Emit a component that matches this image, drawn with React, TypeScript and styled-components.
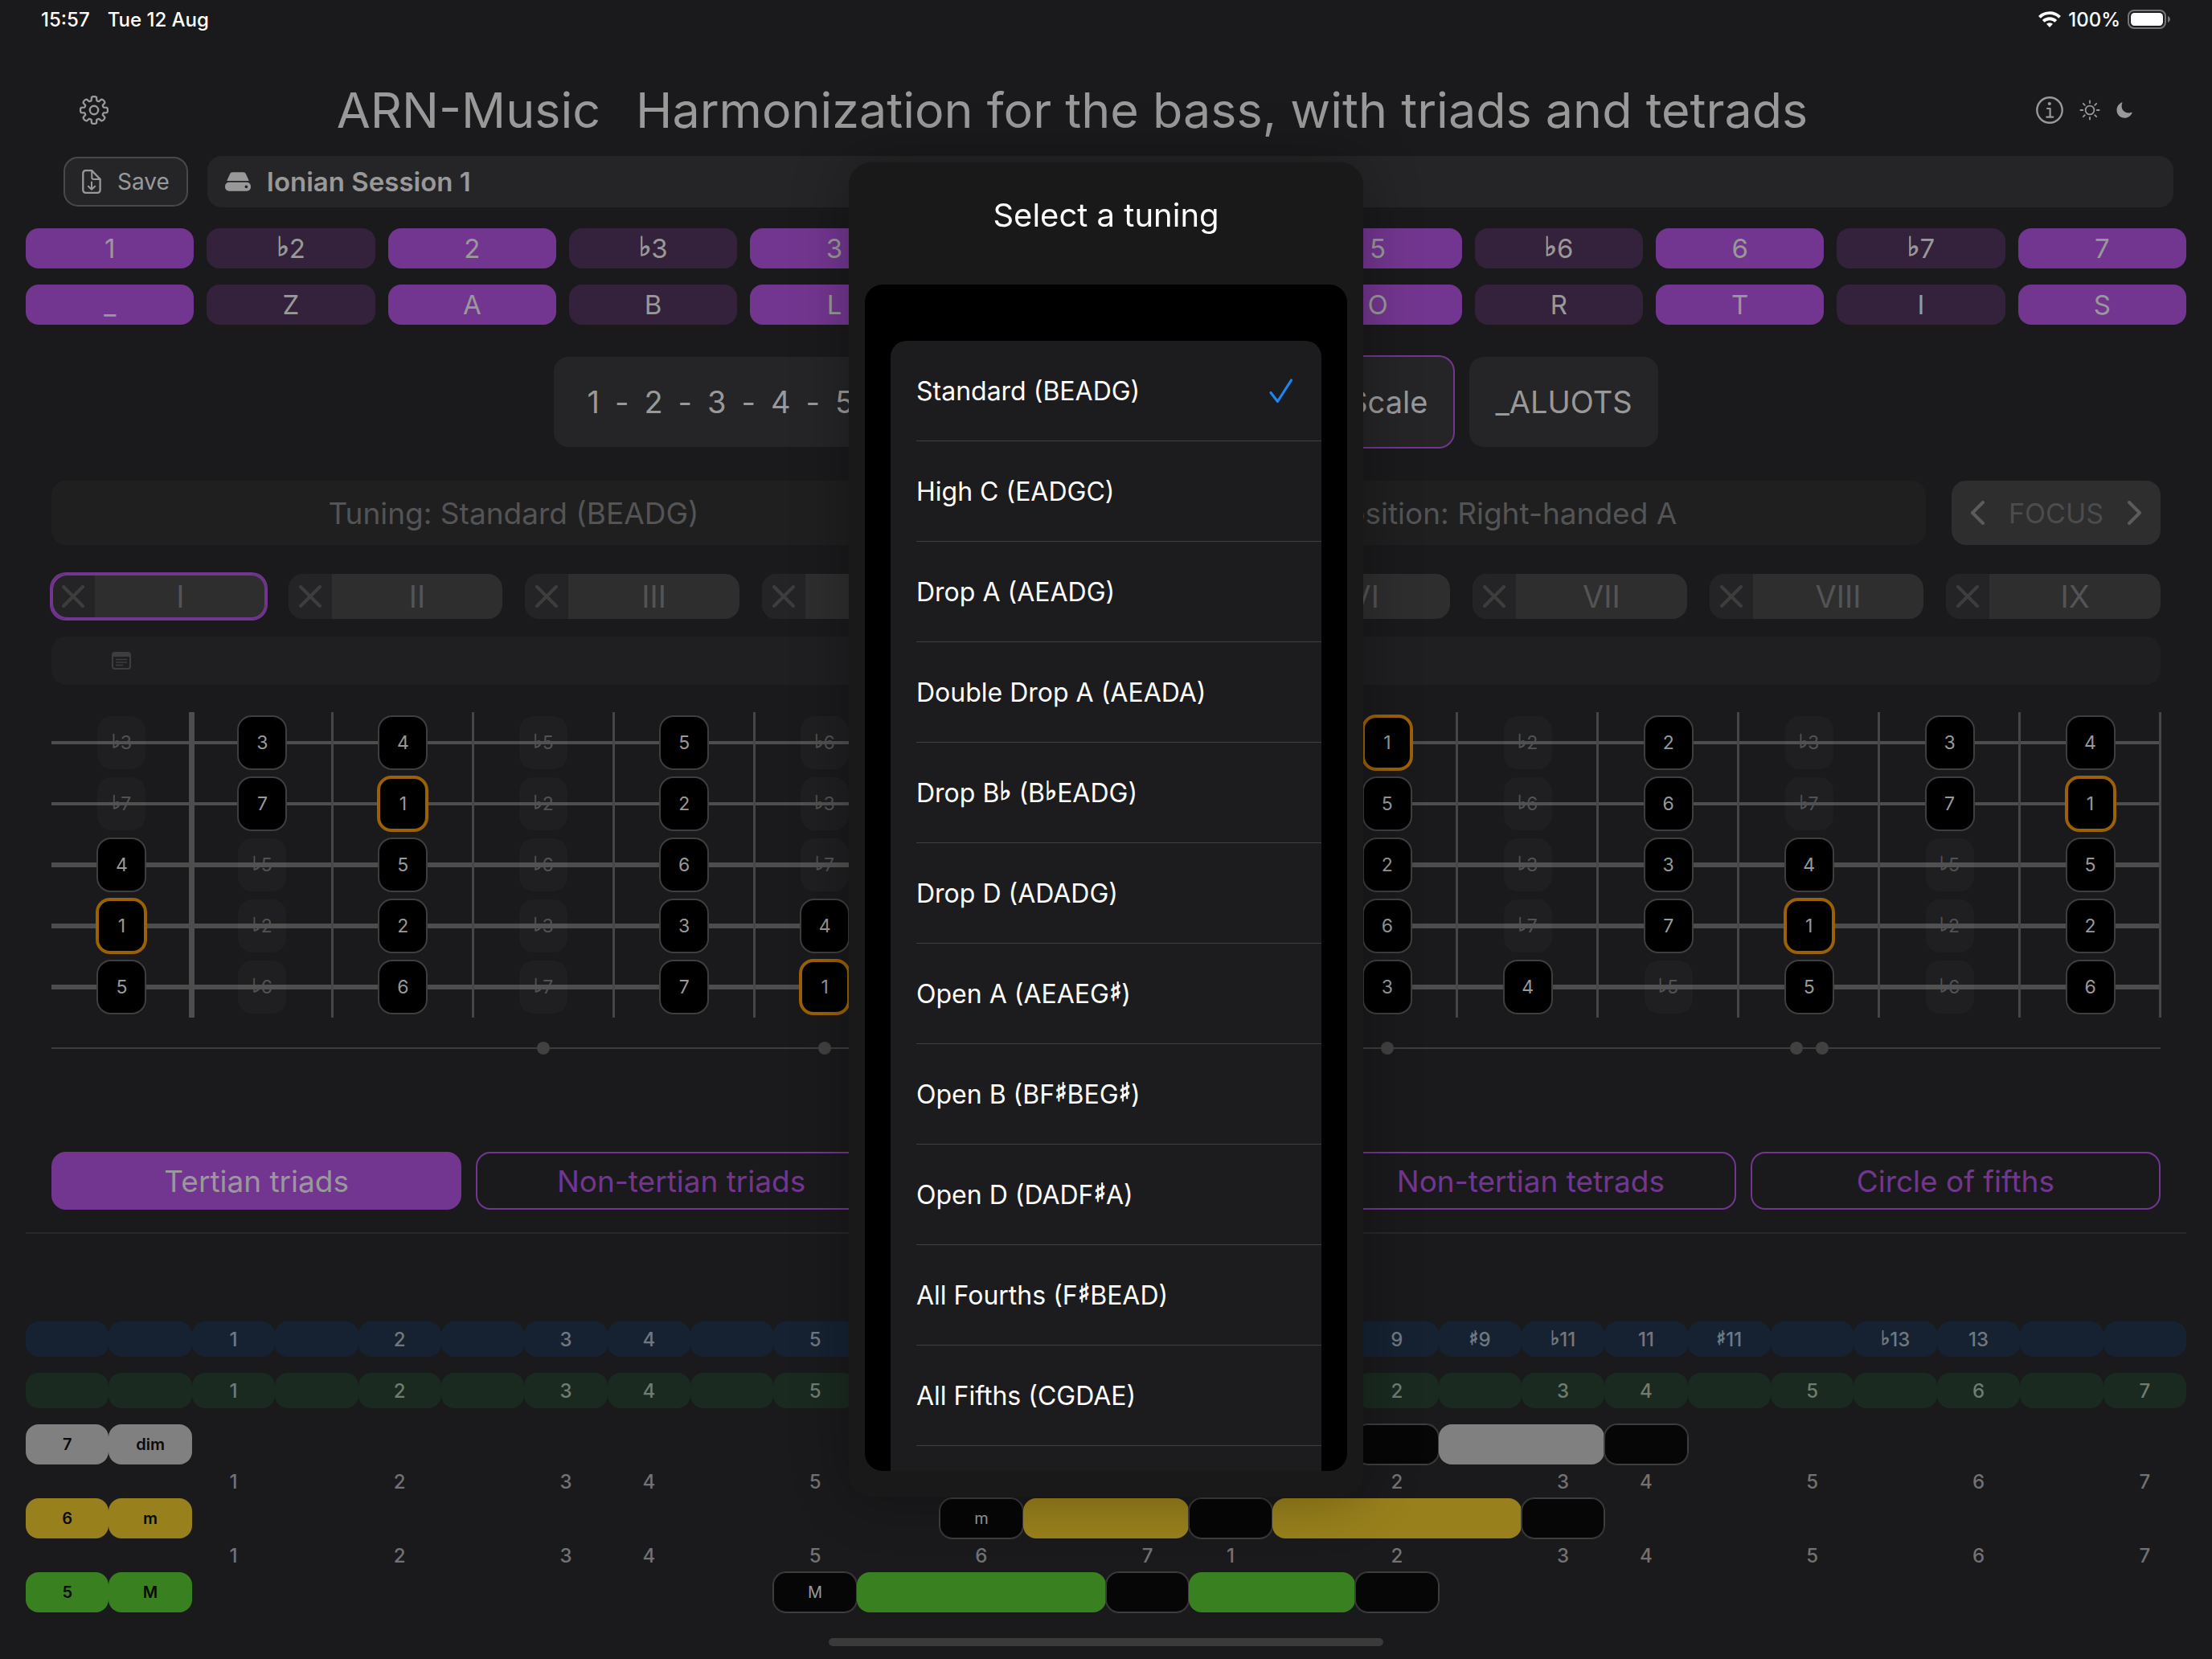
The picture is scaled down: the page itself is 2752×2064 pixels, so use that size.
import React, { useState } from "react";
import styled, { createGlobalStyle, css } from "styled-components";

/* ---------- theme ---------- */

const color = {
  page: "#1a1a1c",
  text: "#999999",
  muted: "#545456",
  faint: "#3d3d3d",
  card: "#252527",
  purple: "#733690",
  purpleDark: "#34213c",
  blueRow: "#162232",
  greenRow: "#1a2a20",
  root: "#9b6107",
};

const GlobalStyle = createGlobalStyle`
  *, *::before, *::after { box-sizing: border-box; }
  body {
    margin: 0;
    background: ${color.page};
    color: ${color.text};
    font-family: Inter, Roboto, "Liberation Sans", sans-serif;
  }
  button {
    margin: 0;
    padding: 0;
    border: 0;
    background: none;
    color: inherit;
    font: inherit;
    cursor: pointer;
  }
  svg { display: block; flex: none; }
`;

/* ---------- data ---------- */

const CHROMATIC = ["1", "♭2", "2", "♭3", "3", "4", "♭5", "5", "♭6", "6", "♭7", "7"];
const LETTERS = ["_", "Z", "A", "B", "L", "U", "X", "O", "R", "T", "I", "S"];
const CHORDS = ["I", "II", "III", "IV", "V", "VI", "VII", "VIII", "IX"];
const STRINGS = [
  { open: 3, gauge: 4 },
  { open: 10, gauge: 4 },
  { open: 5, gauge: 6 },
  { open: 0, gauge: 6 },
  { open: 7, gauge: 6 },
];
const FRETS = 15;
const INLAYS: Record<number, number> = { 3: 1, 5: 1, 7: 1, 9: 1, 12: 2 };
const MODES = [
  "Tertian triads",
  "Non-tertian triads",
  "Tertian tetrads",
  "Non-tertian tetrads",
  "Circle of fifths",
];
const TUNINGS = [
  "Standard (BEADG)",
  "High C (EADGC)",
  "Drop A (AEADG)",
  "Double Drop A (AEADA)",
  "Drop B♭ (B♭EADG)",
  "Drop D (ADADG)",
  "Open A (AEAEG♯)",
  "Open B (BF♯BEG♯)",
  "Open D (DADF♯A)",
  "All Fourths (F♯BEAD)",
  "All Fifths (CGDAE)",
  "",
];
const COLUMNS = 26;
const EXTENSIONS: Record<number, string> = {
  2: "1", 4: "2", 6: "3", 7: "4", 9: "5", 11: "6", 13: "7", 14: "8", 16: "9",
  17: "♯9", 18: "♭11", 19: "11", 20: "♯11", 22: "♭13", 23: "13",
};
const DEGREES: Record<number, string> = {
  2: "1", 4: "2", 6: "3", 7: "4", 9: "5", 11: "6", 13: "7", 14: "1", 16: "2",
  18: "3", 19: "4", 21: "5", 23: "6", 25: "7",
};
const TRIADS = [
  { degree: "7", quality: "dim", tint: "#808080", start: 13, gaps: [2, 2] },
  { degree: "6", quality: "m", tint: "#98801c", start: 11, gaps: [2, 3] },
  { degree: "5", quality: "M", tint: "#398120", start: 9, gaps: [3, 2] },
];

/* ---------- icons ---------- */

const gearPath = (() => {
  const teeth = 8;
  const p = (r: number, a: number) =>
    `${(18 + r * Math.cos(a)).toFixed(2)} ${(18 + r * Math.sin(a)).toFixed(2)}`;
  let d = "";
  for (let i = 0; i < teeth; i++) {
    const a = (i * 2 * Math.PI) / teeth;
    d += `${i ? "L" : "M"}${p(12.4, a - 0.27)} L${p(16.2, a - 0.19)} Q${p(17.2, a - 0.12)} ${p(17, a)} Q${p(17.2, a + 0.12)} ${p(16.2, a + 0.19)} L${p(12.4, a + 0.27)} Q${p(11.6, a + 0.39)} ${p(12.4, a + 0.51)}`;
  }
  return d + "Z";
})();

const GearIcon = () => (
  <svg width="36" height="36" viewBox="0 0 36 36" fill="none" stroke="currentColor" strokeWidth="2.3" strokeLinejoin="round">
    <path d={gearPath} />
    <circle cx="18" cy="18" r="5.2" strokeWidth="2.4" />
  </svg>
);

const InfoIcon = () => (
  <svg width="34" height="34" viewBox="0 0 34 34" fill="none" stroke="currentColor" strokeWidth="2.4" strokeLinecap="round" strokeLinejoin="round">
    <circle cx="17" cy="17" r="15.7" />
    <path d="M14 15h3.6v10.4M13.3 25.6h8" strokeWidth="2.2" />
    <circle cx="16.8" cy="9" r="2.1" fill="currentColor" stroke="none" />
  </svg>
);

const SunIcon = () => (
  <svg width="26" height="26" viewBox="0 0 26 26" fill="none" stroke="currentColor" strokeWidth="1.8" strokeLinecap="round">
    <circle cx="13" cy="13" r="5.4" />
    {[0, 45, 90, 135, 180, 225, 270, 315].map((a) => (
      <path key={a} d="M13 1.4v2.8" transform={`rotate(${a} 13 13)`} />
    ))}
  </svg>
);

const MoonIcon = () => (
  <svg width="20" height="20" viewBox="0 0 20 20" fill="currentColor">
    <path d="M6.6.4c.5-.3 1 .1.8.7-.5 1.200-.8 2.500-.8 3.900 0 4.900 3.700 8.400 8.600 8.400 1.400 0 2.600-.2 3.600-.7.600-.2 1 .2.800.8C18 17.200 14.600 19.800 10.400 19.800 4.800 19.800.5 15.600.5 10 .5 5.800 2.900 2.100 6.600.4z" />
  </svg>
);

const SaveIcon = () => (
  <svg width="24" height="30" viewBox="0 0 24 30" fill="none" stroke="currentColor" strokeWidth="2.3" strokeLinecap="round" strokeLinejoin="round">
    <path d="M4.500 1.200h7.800L22.600 12v13.600a3.200 3.200 0 0 1-3.200 3.200H4.500a3.200 3.200 0 0 1-3.200-3.200V4.400a3.200 3.200 0 0 1 3.200-3.200z" />
    <path d="M12.300 1.200v8.600a2.200 2.200 0 0 0 2.200 2.200h8.100M12 15.500v9.200M7.800 20.800l4.200 4 4.200-4" strokeWidth="2" />
  </svg>
);

const DriveIcon = () => (
  <svg width="32" height="24" viewBox="0 0 32 24" fill="currentColor">
    <path d="M9.500.3h13c1.700 0 2.700.8 3.400 2.300l3.600 7.600c.2.600-.1.900-.7.900H3.200c-.6 0-.9-.3-.7-.9L6.100 2.600C6.800 1.100 7.800.3 9.500.3z" />
    <path fillRule="evenodd" d="M5 12.800h22a5 5 0 0 1 5 5v.9a5 5 0 0 1-5 5H5a5 5 0 0 1-5-5v-.9a5 5 0 0 1 5-5zm21.400 3.600a1.900 1.900 0 1 0 0 3.800 1.900 1.900 0 0 0 0-3.800z" />
  </svg>
);

const WifiIcon = () => (
  <svg width="28" height="20" viewBox="0 0 28 20" fill="none" stroke="currentColor" strokeWidth="3.900">
    <path d="M1.400 7.300a18 18 0 0 1 25.200 0" />
    <path d="M6.200 12.400a11.200 11.200 0 0 1 15.600 0" />
    <path d="M14 20l-4-4.200a5.700 5.700 0 0 1 8 0z" fill="currentColor" stroke="none" />
  </svg>
);

const BatteryIcon = () => (
  <svg width="54" height="24" viewBox="0 0 54 24">
    <rect x="1" y="1" width="46" height="22" rx="7" fill="none" stroke="#767678" strokeWidth="2" />
    <rect x="4" y="4" width="40" height="16" rx="4.500" fill="#fff" />
    <path d="M50 8c1.900.8 3 2.200 3 4s-1.100 3.200-3 4z" fill="#767678" />
  </svg>
);

const CloseIcon = () => (
  <svg width="28" height="28" viewBox="0 0 28 28" fill="none" stroke="currentColor" strokeWidth="4" strokeLinecap="round">
    <path d="M2 2l24 24M26 2L2 26" />
  </svg>
);

const ChevronIcon = ({ right = false }: { right?: boolean }) => (
  <svg width="18" height="30" viewBox="0 0 18 30" fill="none" stroke="#5c5c5c" strokeWidth="4" strokeLinecap="round" strokeLinejoin="round">
    <path d={right ? "M3 2l13 13L3 28" : "M15 2L2 15l13 13"} />
  </svg>
);

const NoteIcon = () => (
  <svg width="24" height="22" viewBox="0 0 24 22" fill="none" stroke="currentColor" strokeWidth="2">
    <rect x="1" y="1" width="22" height="20" rx="3" />
    <path d="M1 4h22" strokeWidth="4" />
    <path d="M5 9.500h14M5 13h14M5 16.500h9" strokeWidth="1.500" />
  </svg>
);

const CheckIcon = () => (
  <svg width="32" height="32" viewBox="0 0 32 32" fill="none" stroke="#1a86f2" strokeWidth="3.200" strokeLinecap="round" strokeLinejoin="round">
    <path d="M3 18.500l8.500 11L28.500 3" />
  </svg>
);

/* ---------- musical text ---------- */

const Accidental = styled.span`
  font-family: "DejaVu Sans", sans-serif;
  font-weight: 700;
  line-height: 0;
  vertical-align: 0.08em;
  -webkit-text-stroke: 1px currentColor;
`;

function Music({ children }: { children?: string }) {
  return (
    <span>
      {(children ?? "").split(/([♭♯])/).map((part, i) =>
        i % 2 ? <Accidental key={i}>{part}</Accidental> : part,
      )}
    </span>
  );
}

/* ---------- page and header ---------- */

const Page = styled.main`
  display: flex;
  flex-direction: column;
  min-height: 100vh;
  overflow: hidden;
`;

const StatusBar = styled.div`
  display: flex;
  align-items: center;
  height: 48px;
  padding: 0 51px;
  color: #fff;
  font-size: 24px;
  font-weight: 500;
`;

const StatusGroup = styled.div<{ $gap: number }>`
  display: flex;
  align-items: center;
  gap: ${(p) => p.$gap}px;
  & + & { margin-left: auto; }
`;

const Header = styled.header`
  display: flex;
  align-items: center;
  justify-content: space-between;
  height: 114px;
  margin-top: 32px;
  padding: 0 99px;
`;

const Title = styled.h1`
  display: flex;
  gap: 44px;
  margin: 0;
  font-size: 61px;
  font-weight: 400;
`;

const HeaderActions = styled.div`
  display: flex;
  align-items: center;
  gap: 20px;
`;

const SessionRow = styled.div`
  display: flex;
  align-items: center;
  gap: 24px;
  padding: 0 48px 0 79px;
`;

const SaveButton = styled.button`
  display: flex;
  align-items: center;
  gap: 20px;
  height: 62px;
  padding: 0 21px;
  border: 2px solid #48484a;
  border-radius: 18px;
  background: ${color.card};
  font-size: 28px;
`;

const SessionBar = styled.div`
  display: flex;
  flex: 1;
  align-items: center;
  gap: 20px;
  height: 64px;
  padding: 0 22px;
  border-radius: 18px;
  background: ${color.card};
  font-size: 33px;
  font-weight: 600;
`;

/* ---------- scale ---------- */

const DegreeGrid = styled.div`
  display: grid;
  grid-template-columns: repeat(12, 1fr);
  gap: 20px 16px;
  margin-top: 26px;
  padding: 0 32px;
`;

const DegreeButton = styled.button<{ $on: boolean }>`
  height: 50px;
  border-radius: 16px;
  background: ${(p) => (p.$on ? color.purple : color.purpleDark)};
  font-size: 33px;
  line-height: 50px;
`;

const FormulaRow = styled.div`
  display: flex;
  justify-content: center;
  gap: 20px;
  margin-top: 40px;
`;

const FormulaButton = styled.button<{ $selected?: boolean; $steps?: boolean }>`
  display: flex;
  align-items: center;
  gap: 19px;
  height: 112px;
  padding: 0 ${(p) => (p.$steps ? 41 : 32)}px;
  border-radius: 18px;
  background: ${color.card};
  font-size: 38px;
  ${(p) => p.$selected && css`box-shadow: 0 0 0 2px ${color.purple};`}
`;

/* ---------- configuration ---------- */

const ConfigRow = styled.div`
  display: grid;
  grid-template-columns: 1fr 1fr 260px;
  gap: 32px;
  margin-top: 42px;
  padding: 0 64px;
`;

const ConfigButton = styled.button`
  height: 80px;
  border-radius: 18px;
  background: #1f1f1f;
  color: ${color.muted};
  font-size: 37px;
`;

const FocusControl = styled.div`
  display: flex;
  align-items: center;
  justify-content: space-between;
  height: 80px;
  padding: 0 24px;
  border-radius: 18px;
  background: #2e2e2e;
  color: #4c4c4e;
  font-size: 34px;
`;

const ChordTabs = styled.div`
  display: grid;
  grid-template-columns: repeat(9, 1fr);
  gap: 28px;
  margin-top: 36px;
  padding: 0 64px;
`;

const ChordTab = styled.div<{ $selected: boolean }>`
  display: flex;
  height: 56px;
  overflow: hidden;
  border-radius: 18px;
  background: #2e2e2e;
  color: ${color.muted};
  font-size: 38px;
  ${(p) => p.$selected && css`box-shadow: 0 0 0 2px ${color.purple}, inset 0 0 0 2px ${color.purple};`}
`;

const ChordClose = styled.button<{ $selected: boolean }>`
  display: flex;
  align-items: center;
  justify-content: center;
  width: 54px;
  background: #242426;
  color: ${color.faint};
  ${(p) => p.$selected && css`
    box-shadow: inset 2px 2px ${color.purple}, inset 2px -2px ${color.purple};
    border-radius: 18px 0 0 18px;
  `}
`;

const ChordName = styled.button`
  flex: 1;
  line-height: 56px;
`;

const NotesBar = styled.div`
  display: grid;
  grid-template-columns: repeat(15, 1fr);
  align-items: center;
  justify-items: center;
  height: 60px;
  margin: 22px 64px 0;
  border-radius: 18px;
  background: #1f1f21;
  color: ${color.faint};
`;

/* ---------- fretboard ---------- */

const Fretboard = styled.div`
  display: flex;
  flex-direction: column;
  margin: 34px 64px 0;
`;

const StringRow = styled.div<{ $gauge: number }>`
  display: grid;
  grid-template-columns: repeat(${FRETS}, 1fr);
  height: 76px;
  background: linear-gradient(#4d4d4d, #4d4d4d) center / 100% ${(p) => p.$gauge}px no-repeat;
`;

const FretCell = styled.div<{ $nut: boolean }>`
  position: relative;
  display: flex;
  align-items: center;
  justify-content: center;
  &::after {
    content: "";
    position: absolute;
    top: 0;
    bottom: 0;
    right: ${(p) => (p.$nut ? -3 : -1)}px;
    width: ${(p) => (p.$nut ? 7 : 3)}px;
    background: ${(p) => (p.$nut ? "#4d4d4d" : "#464648")};
  }
`;

const noteKinds = {
  root: css`
    width: 64px;
    height: 70px;
    border: 4px solid ${color.root};
    background: #000;
  `,
  scale: css`
    width: 62px;
    height: 68px;
    border: 2px solid #3e3e40;
    background: #000;
  `,
  ghost: css`
    width: 60px;
    height: 66px;
    background: rgba(255, 255, 255, 0.022);
    color: #525254;
  `,
};

const Note = styled.span<{ $kind: keyof typeof noteKinds }>`
  display: flex;
  align-items: center;
  justify-content: center;
  border-radius: 18px;
  font-size: 23px;
  ${(p) => noteKinds[p.$kind]}
`;

const InlayLine = styled.div`
  display: grid;
  grid-template-columns: repeat(${FRETS}, 1fr);
  height: 16px;
  margin: 30px 64px 0;
  background: linear-gradient(#3d3d3d, #3d3d3d) center / 100% 2px no-repeat;
`;

const InlayCell = styled.div`
  display: flex;
  justify-content: center;
  gap: 16px;
`;

const Inlay = styled.span`
  width: 16px;
  height: 16px;
  border-radius: 50%;
  background: #414141;
`;

/* ---------- chord modes and chart ---------- */

const ModeRow = styled.div`
  display: grid;
  grid-template-columns: repeat(5, 1fr);
  gap: 18px;
  margin-top: 121px;
  padding: 0 64px;
`;

const ModeButton = styled.button<{ $selected: boolean }>`
  height: 72px;
  border: 2px solid ${color.purple};
  border-radius: 18px;
  background: ${(p) => (p.$selected ? color.purple : "transparent")};
  color: ${(p) => (p.$selected ? color.text : color.purple)};
  font-size: 37px;
`;

const Divider = styled.hr`
  width: auto;
  height: 2px;
  margin: 28px 32px 0;
  border: 0;
  background: #28282a;
`;

const Chart = styled.div`
  display: flex;
  flex-direction: column;
  margin: 109px 32px 0;
`;

const ChartRow = styled.div<{ $height: number; $spaced?: boolean }>`
  display: grid;
  grid-template-columns: repeat(${COLUMNS}, 1fr);
  height: ${(p) => p.$height}px;
  margin-bottom: ${(p) => (p.$spaced ? 20 : 0)}px;
`;

const ScaleCell = styled.span<{ $bg?: string; $fg: string }>`
  display: flex;
  align-items: center;
  justify-content: center;
  border-radius: 16px;
  background: ${(p) => p.$bg ?? "transparent"};
  color: ${(p) => p.$fg};
  font-size: 24px;
  font-weight: 500;
`;

const ChordCell = styled.span<{ $column: number; $span?: number; $tint?: string }>`
  display: flex;
  align-items: center;
  justify-content: center;
  grid-row: 1;
  grid-column: ${(p) => p.$column + 1} / span ${(p) => p.$span ?? 1};
  border-radius: 16px;
  background: ${(p) => p.$tint ?? "#060606"};
  color: ${(p) => (p.$tint ? "#0a0a0a" : color.text)};
  font-size: 20px;
  font-weight: ${(p) => (p.$tint ? 600 : 400)};
  box-shadow: ${(p) => (p.$tint ? "none" : "0 0 0 1px #3e3e40, inset 0 0 0 1px #3e3e40")};
`;

const HomeIndicator = styled.div`
  align-self: center;
  width: 690px;
  height: 10px;
  margin: 32px 0 16px;
  border-radius: 5px;
  background: #3a3a3a;
`;

/* ---------- tuning dialog ---------- */

const Overlay = styled.div`
  position: fixed;
  inset: 0;
  display: flex;
  align-items: center;
  justify-content: center;
`;

const Dialog = styled.section`
  display: flex;
  flex-direction: column;
  width: 640px;
  height: calc(100vh - 404px);
  padding: 0 20px 32px;
  border-radius: 28px;
  background: #191919;
  box-shadow: 0 0 70px rgba(0, 0, 0, 0.3);
  color: #fff;
`;

const DialogTitle = styled.h2`
  margin: 0;
  font-size: 40px;
  font-weight: 400;
  line-height: 132px;
  text-align: center;
  height: 152px;
`;

const ListFrame = styled.div`
  flex: 1;
  min-height: 0;
  overflow: hidden;
  padding: 70px 32px 0;
  border-radius: 22px;
  background: #000;
`;

const TuningList = styled.ul`
  margin: 0;
  padding: 0 0 0 32px;
  list-style: none;
  border-radius: 20px;
  background: #1c1c1e;
`;

const TuningItem = styled.li`
  height: 125px;
  border-bottom: 1px solid #3f3f42;
`;

const TuningButton = styled.button`
  display: flex;
  align-items: center;
  justify-content: space-between;
  width: 100%;
  height: 100%;
  padding-right: 34px;
  font-size: 32px;
  text-align: left;
`;

/* ---------- parts ---------- */

const columns = Array.from({ length: COLUMNS }, (_, i) => i);
const frets = Array.from({ length: FRETS }, (_, i) => i);

function ScaleRow({ labels, bg, fg, height, spaced }: {
  labels: Record<number, string>; bg?: string; fg: string; height: number; spaced?: boolean;
}) {
  return (
    <ChartRow $height={height} $spaced={spaced}>
      {columns.map((c) => (
        <ScaleCell key={c} $bg={bg} $fg={fg}><Music>{labels[c]}</Music></ScaleCell>
      ))}
    </ChartRow>
  );
}

function TriadRow({ degree, quality, tint, start, gaps }: (typeof TRIADS)[number]) {
  const third = start + 1 + gaps[0];
  const fifth = third + 1 + gaps[1];
  return (
    <ChartRow $height={50}>
      <ChordCell $column={0} $tint={tint}>{degree}</ChordCell>
      <ChordCell $column={1} $tint={tint}>{quality}</ChordCell>
      <ChordCell $column={start}>{quality}</ChordCell>
      <ChordCell $column={start + 1} $span={gaps[0]} $tint={tint} />
      <ChordCell $column={third} />
      <ChordCell $column={third + 1} $span={gaps[1]} $tint={tint} />
      <ChordCell $column={fifth} />
    </ChartRow>
  );
}

function noteKind(name: string): keyof typeof noteKinds {
  if (name === "1") return "root";
  return name.startsWith("♭") ? "ghost" : "scale";
}

export default function App() {
  const [tuning, setTuning] = useState(TUNINGS[0]);
  const [mode, setMode] = useState(MODES[0]);
  const [chord, setChord] = useState(CHORDS[0]);

  return (
    <>
      <GlobalStyle />
      <Page>
        <StatusBar>
          <StatusGroup $gap={22}>
            <span>15:57</span>
            <span>Tue 12 Aug</span>
          </StatusGroup>
          <StatusGroup $gap={9}>
            <WifiIcon />
            <span>100%</span>
            <BatteryIcon />
          </StatusGroup>
        </StatusBar>

        <Header>
          <button aria-label="Settings"><GearIcon /></button>
          <Title>
            <span>ARN-Music</span>
            <span>Harmonization for the bass, with triads and tetrads</span>
          </Title>
          <HeaderActions>
            <button aria-label="Information"><InfoIcon /></button>
            <button aria-label="Light mode"><SunIcon /></button>
            <button aria-label="Dark mode"><MoonIcon /></button>
          </HeaderActions>
        </Header>

        <SessionRow>
          <SaveButton><SaveIcon />Save</SaveButton>
          <SessionBar><DriveIcon />Ionian Session 1</SessionBar>
        </SessionRow>

        <DegreeGrid>
          {CHROMATIC.map((n) => (
            <DegreeButton key={n} $on={!n.startsWith("♭")}><Music>{n}</Music></DegreeButton>
          ))}
          {LETTERS.map((n, i) => (
            <DegreeButton key={n} $on={!CHROMATIC[i].startsWith("♭")}>{n}</DegreeButton>
          ))}
        </DegreeGrid>

        <FormulaRow>
          <FormulaButton $steps>
            {"1-2-3-4-5-6-7".split("").map((s, i) => <span key={i}>{s}</span>)}
          </FormulaButton>
          <FormulaButton $selected>Ionian Scale / Major Scale</FormulaButton>
          <FormulaButton>_ALUOTS</FormulaButton>
        </FormulaRow>

        <ConfigRow>
          <ConfigButton>Tuning: {tuning}</ConfigButton>
          <ConfigButton>Transposition: Right-handed A</ConfigButton>
          <FocusControl>
            <button aria-label="Previous"><ChevronIcon /></button>
            FOCUS
            <button aria-label="Next"><ChevronIcon right /></button>
          </FocusControl>
        </ConfigRow>

        <ChordTabs>
          {CHORDS.map((c) => (
            <ChordTab key={c} $selected={c === chord}>
              <ChordClose $selected={c === chord} aria-label={`Clear ${c}`}><CloseIcon /></ChordClose>
              <ChordName onClick={() => setChord(c)}>{c}</ChordName>
            </ChordTab>
          ))}
        </ChordTabs>

        <NotesBar><NoteIcon /></NotesBar>

        <Fretboard>
          {STRINGS.map((s) => (
            <StringRow key={s.open} $gauge={s.gauge}>
              {frets.map((f) => {
                const name = CHROMATIC[(s.open + f) % 12];
                return (
                  <FretCell key={f} $nut={f === 0}>
                    <Note $kind={noteKind(name)}><Music>{name}</Music></Note>
                  </FretCell>
                );
              })}
            </StringRow>
          ))}
        </Fretboard>
        <InlayLine>
          {frets.map((f) => (
            <InlayCell key={f}>
              {Array.from({ length: INLAYS[f] ?? 0 }, (_, i) => <Inlay key={i} />)}
            </InlayCell>
          ))}
        </InlayLine>

        <ModeRow>
          {MODES.map((m) => (
            <ModeButton key={m} $selected={m === mode} onClick={() => setMode(m)}>{m}</ModeButton>
          ))}
        </ModeRow>
        <Divider />

        <Chart>
          <ScaleRow labels={EXTENSIONS} bg={color.blueRow} fg="#70787f" height={44} spaced />
          <ScaleRow labels={DEGREES} bg={color.greenRow} fg="#6f7c72" height={44} spaced />
          {TRIADS.map((t, i) => (
            <React.Fragment key={t.degree}>
              {i > 0 && <ScaleRow labels={DEGREES} fg="#727274" height={42} />}
              <TriadRow {...t} />
            </React.Fragment>
          ))}
        </Chart>
        <HomeIndicator />
      </Page>

      <Overlay>
        <Dialog role="dialog" aria-labelledby="tuning-title">
          <DialogTitle id="tuning-title">Select a tuning</DialogTitle>
          <ListFrame>
            <TuningList>
              {TUNINGS.map((t) => (
                <TuningItem key={t}>
                  <TuningButton onClick={() => setTuning(t)}>
                    <Music>{t}</Music>
                    {t === tuning && <CheckIcon />}
                  </TuningButton>
                </TuningItem>
              ))}
            </TuningList>
          </ListFrame>
        </Dialog>
      </Overlay>
    </>
  );
}
